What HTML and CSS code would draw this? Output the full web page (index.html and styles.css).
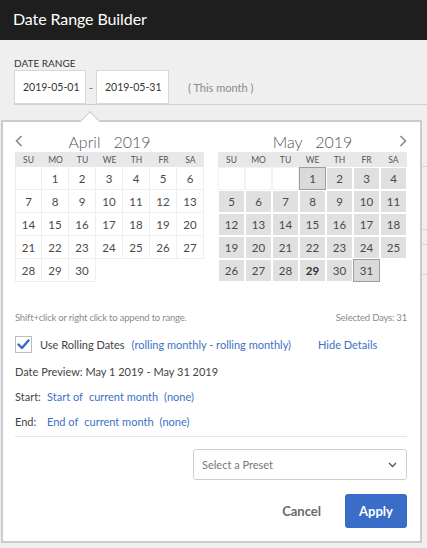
FILE: index.html
```html
<!DOCTYPE html>
<html>
<head>
<meta charset="utf-8">
<link rel="stylesheet" href="styles.css">
</head>
<body>
<header class="topbar"><h1 class="title">Date Range Builder</h1></header>
<main class="main">
  <div class="range-label">DATE RANGE</div>
  <div class="range-row">
    <div class="date-input">2019-05-01</div>
    <span class="dash">-</span>
    <div class="date-input">2019-05-31</div>
    <span class="range-note">( This month )</span>
  </div>
  <div class="bg-rows">
    <div class="bg-row r1"></div>
    <div class="bg-row r2"></div>
    <div class="bg-row r3"></div>
    <div class="bg-row r4"></div>
  </div>

  <section class="popup">
    <div class="calendars">
      <div class="cal">
        <div class="cal-head">
          <svg class="arrow left" width="8" height="12" viewBox="0 0 8 12"><path d="M6.5 1 L1.5 6 L6.5 11" fill="none" stroke="#8a8a8a" stroke-width="1.6"/></svg>
          <span class="cal-title">April&nbsp;&nbsp; 2019</span>
        </div>
        <div class="grid april">
          <div class="dow">SU</div><div class="dow">MO</div><div class="dow">TU</div><div class="dow">WE</div><div class="dow">TH</div><div class="dow">FR</div><div class="dow">SA</div>
          <div class="d"></div><div class="d">1</div><div class="d">2</div><div class="d">3</div><div class="d">4</div><div class="d">5</div><div class="d">6</div>
          <div class="d">7</div><div class="d">8</div><div class="d">9</div><div class="d">10</div><div class="d">11</div><div class="d">12</div><div class="d">13</div>
          <div class="d">14</div><div class="d">15</div><div class="d">16</div><div class="d">17</div><div class="d">18</div><div class="d">19</div><div class="d">20</div>
          <div class="d">21</div><div class="d">22</div><div class="d">23</div><div class="d">24</div><div class="d">25</div><div class="d">26</div><div class="d">27</div>
          <div class="d">28</div><div class="d">29</div><div class="d">30</div>
        </div>
      </div>
      <div class="cal">
        <div class="cal-head">
          <span class="cal-title">May&nbsp;&nbsp; 2019</span>
          <svg class="arrow right" width="8" height="12" viewBox="0 0 8 12"><path d="M1.5 1 L6.5 6 L1.5 11" fill="none" stroke="#8a8a8a" stroke-width="1.6"/></svg>
        </div>
        <div class="grid may">
          <div class="dow">SU</div><div class="dow">MO</div><div class="dow">TU</div><div class="dow">WE</div><div class="dow">TH</div><div class="dow">FR</div><div class="dow">SA</div>
          <div class="d empty"></div><div class="d empty"></div><div class="d empty"></div><div class="d sel end">1</div><div class="d sel">2</div><div class="d sel">3</div><div class="d sel">4</div>
          <div class="d sel">5</div><div class="d sel">6</div><div class="d sel">7</div><div class="d sel">8</div><div class="d sel">9</div><div class="d sel">10</div><div class="d sel">11</div>
          <div class="d sel">12</div><div class="d sel">13</div><div class="d sel">14</div><div class="d sel">15</div><div class="d sel">16</div><div class="d sel">17</div><div class="d sel">18</div>
          <div class="d sel">19</div><div class="d sel">20</div><div class="d sel">21</div><div class="d sel">22</div><div class="d sel">23</div><div class="d sel">24</div><div class="d sel">25</div>
          <div class="d sel">26</div><div class="d sel">27</div><div class="d sel">28</div><div class="d sel today">29</div><div class="d sel">30</div><div class="d sel end">31</div>
        </div>
      </div>
    </div>

    <div class="hint-row">
      <span>Shift+click or right click to append to range.</span>
      <span>Selected Days: 31</span>
    </div>

    <div class="rolling-row">
      <span class="checkbox"><svg width="15" height="15" viewBox="0 0 15 15"><path d="M2.5 7.5 L6 11 L12.5 3.5" fill="none" stroke="#2f6cc4" stroke-width="2.4" stroke-linecap="round" stroke-linejoin="round"/></svg></span>
      <span class="rolling-label">Use Rolling Dates</span>
      <a class="link rolling-link">(rolling monthly - rolling monthly)</a>
      <a class="link hide-link">Hide Details</a>
    </div>

    <div class="info-line">Date Preview: May 1 2019 - May 31 2019</div>
    <div class="info-line spec"><span class="spec-label">Start:</span><a class="link">Start of</a><a class="link gap">current month</a><a class="link gap">(none)</a></div>
    <div class="info-line spec"><span class="spec-label">End:</span><a class="link">End of</a><a class="link gap">current month</a><a class="link gap">(none)</a></div>

    <hr class="sep">

    <div class="preset-row">
      <div class="preset">
        <span>Select a Preset</span>
        <svg width="9" height="6" viewBox="0 0 9 6"><path d="M1 1 L4.5 4.5 L8 1" fill="none" stroke="#555" stroke-width="1.3"/></svg>
      </div>
    </div>

    <div class="actions">
      <button class="btn cancel">Cancel</button>
      <button class="btn apply">Apply</button>
    </div>
  </section>
</main>
</body>
</html>
```
FILE: styles.css
```css
* { box-sizing: border-box; }
html, body { margin: 0; padding: 0; }
body {
  width: 427px;
  height: 548px;
  overflow: hidden;
  background: #efefef;
  font-family: Lato, "Open Sans", sans-serif;
  color: #333;
}
.topbar {
  height: 40px;
  background: #1e1e1e;
  padding: 0 0 4px 13px;
  display: flex;
  align-items: center;
}
.title {
  margin: 0;
  font-size: 16px;
  font-weight: 400;
  color: #fff;
  letter-spacing: -0.1px;
}
.main {
  position: relative;
  padding: 16px 0 0 14px;
}
.range-label {
  height: 14px;
  line-height: 14px;
  font-size: 10px;
  color: #333;
}
.range-row {
  display: flex;
  align-items: center;
  height: 35px;
  border-bottom: 1px solid #cfcfcf;
}
.date-input {
  width: 72px;
  height: 34px;
  align-self: flex-start;
  background: #fff;
  border: 1px solid #d8d8d8;
  font-size: 10.5px;
  color: #333;
  display: flex;
  align-items: center;
  padding-left: 8px;
}
.date-input + .dash + .date-input { width: 73px; }
.dash {
  width: 10px;
  text-align: center;
  font-size: 12px;
  color: #777;
}
.range-note {
  margin-left: 19px;
  font-size: 11px;
  color: #8a8a8a;
}
.bg-rows { display: flex; flex-direction: column; }
.bg-row { border-bottom: 1px solid #d6d6d6; }
.r1 { height: 62px; }
.r2 { height: 63px; }
.r3 { height: 15px; }
.r4 { height: 30px; }

.popup {
  position: absolute;
  left: 1px;
  top: 80px;
  width: 421px;
  height: 423px;
  background: #fff;
  border: 2px solid #cbcbcb;
  padding: 0 13px 0 12px;
}
.popup::before {
  content: "";
  position: absolute;
  top: -8px;
  left: 80px;
  width: 13px;
  height: 13px;
  background: #fff;
  border-left: 1px solid #cbcbcb;
  border-top: 1px solid #cbcbcb;
  transform: rotate(45deg);
}
.calendars {
  display: flex;
  gap: 14px;
}
.cal { width: 189px; }
.cal-head {
  height: 30px;
  display: flex;
  align-items: center;
  justify-content: center;
  position: relative;
  padding-top: 8px;
}
.cal-title {
  font-size: 16px;
  font-weight: 300;
  color: #555;
}
.arrow { position: absolute; top: 13px; }
.arrow.left { left: 0; }
.arrow.right { right: 0; }
.grid {
  display: grid;
  grid-template-columns: repeat(7, 27px);
  grid-auto-rows: 23px;
  grid-template-rows: 15px;
}
.dow {
  background: #e8e8e8;
  font-size: 8.5px;
  color: #555;
  display: flex;
  align-items: center;
  justify-content: center;
}
.d {
  font-size: 11.5px;
  color: #4a4a4a;
  display: flex;
  align-items: center;
  justify-content: center;
}
.april .d {
  border-right: 1px solid #eeeeee;
  border-bottom: 1px solid #eeeeee;
}
.april .d:nth-child(7n+1) { border-left: 1px solid #eeeeee; }
.may .d { border: 1px solid #fff; }
.may .empty { border-color: #f3f3f3; }
.may .sel { background: #e0e0e0; }
.may .end { border: 1px solid #9d9d9d; background: #dadada; }
.may .today { font-weight: 700; color: #333; }

.hint-row {
  margin-top: 28px;
  height: 14px;
  display: flex;
  justify-content: space-between;
  align-items: center;
  font-size: 9.5px;
  color: #8c8c8c;
  letter-spacing: -0.2px;
}
.rolling-row {
  margin-top: 11px;
  height: 18px;
  display: flex;
  align-items: center;
  font-size: 11px;
}
.checkbox {
  width: 17px;
  height: 17px;
  border: 1px solid #bdbdbd;
  background: #fff;
  display: flex;
  align-items: center;
  justify-content: center;
}
.rolling-label { margin-left: 8px; color: #444; }
.link { color: #3d71c6; }
.rolling-link { margin-left: 7px; }
.hide-link { margin-left: 27px; }
.info-line {
  margin-top: 10px;
  height: 16px;
  display: flex;
  align-items: center;
  font-size: 11px;
  color: #444;
}
.info-line + .info-line { margin-top: 9px; }
.spec-label { width: 32px; }
.gap { margin-left: 6px; }
.sep {
  margin: 7px 0 0 0;
  border: 0;
  border-top: 1px solid #e6e6e6;
  height: 0;
}
.preset-row {
  margin-top: 12px;
  display: flex;
  justify-content: flex-end;
}
.preset {
  width: 214px;
  height: 31px;
  border: 1px solid #cfcfcf;
  border-radius: 3px;
  padding: 0 9px 0 8px;
  display: flex;
  align-items: center;
  justify-content: space-between;
  font-size: 11px;
  color: #777;
}
.actions {
  margin-top: 14px;
  display: flex;
  justify-content: flex-end;
  align-items: center;
  gap: 24px;
}
.btn {
  font-family: Lato, "Open Sans", sans-serif;
  font-weight: 700;
  font-size: 13px;
  border: 0;
  padding: 0;
}
.cancel { background: none; color: #6a6a6a; }
.apply {
  width: 62px;
  height: 34px;
  background: #3a6dc7;
  color: #fff;
  border-radius: 3px;
}
```
